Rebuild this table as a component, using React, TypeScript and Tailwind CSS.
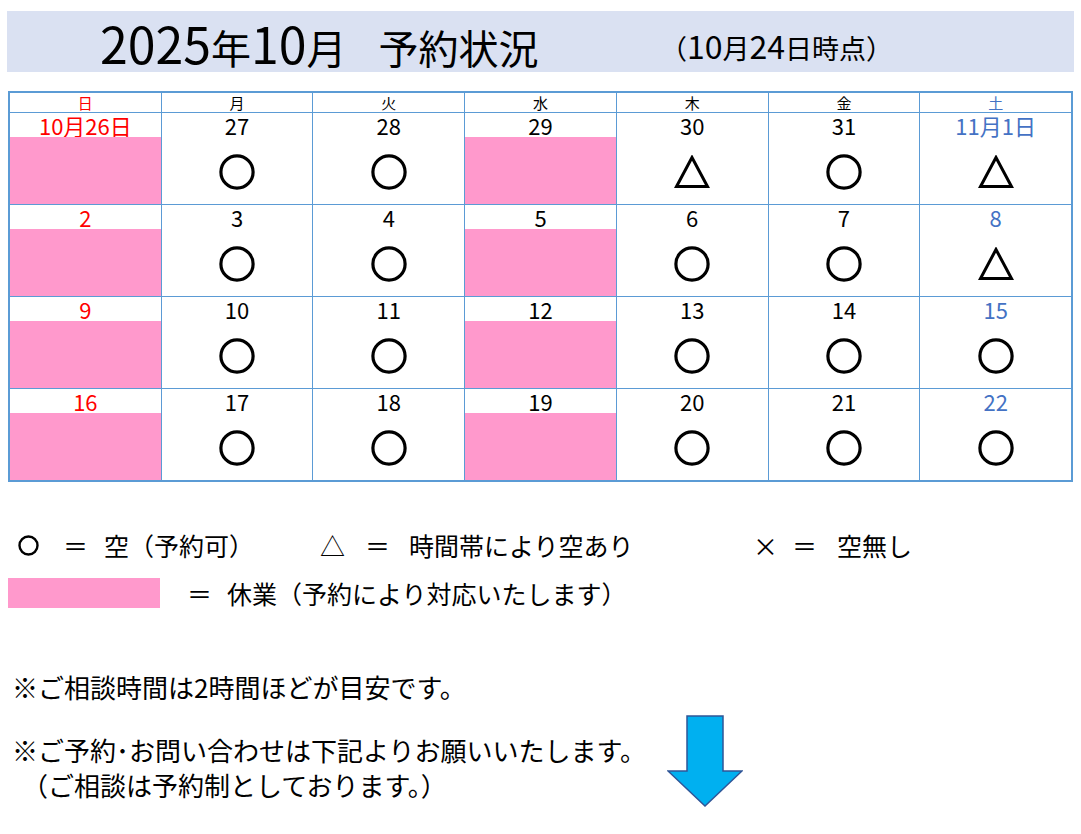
import React from "react";

type Mark = "o" | "t" | null;
type Day = { label: string; mark: Mark; closed?: boolean };

const weeks: Day[][] = [
  [
    { label: "10月26日", mark: null, closed: true },
    { label: "27", mark: "o" },
    { label: "28", mark: "o" },
    { label: "29", mark: null, closed: true },
    { label: "30", mark: "t" },
    { label: "31", mark: "o" },
    { label: "11月1日", mark: "t" },
  ],
  [
    { label: "2", mark: null, closed: true },
    { label: "3", mark: "o" },
    { label: "4", mark: "o" },
    { label: "5", mark: null, closed: true },
    { label: "6", mark: "o" },
    { label: "7", mark: "o" },
    { label: "8", mark: "t" },
  ],
  [
    { label: "9", mark: null, closed: true },
    { label: "10", mark: "o" },
    { label: "11", mark: "o" },
    { label: "12", mark: null, closed: true },
    { label: "13", mark: "o" },
    { label: "14", mark: "o" },
    { label: "15", mark: "o" },
  ],
  [
    { label: "16", mark: null, closed: true },
    { label: "17", mark: "o" },
    { label: "18", mark: "o" },
    { label: "19", mark: null, closed: true },
    { label: "20", mark: "o" },
    { label: "21", mark: "o" },
    { label: "22", mark: "o" },
  ],
];

const heads = ["日", "月", "火", "水", "木", "金", "土"];

function dayColor(i: number) {
  if (i === 0) return "text-[#ff0000]";
  if (i === 6) return "text-[#4472c4]";
  return "text-black";
}

function Circle({ size = 36, stroke = 3.2 }: { size?: number; stroke?: number }) {
  const r = size / 2 - stroke / 2 - 0.3;
  return (
    <svg width={size} height={size} viewBox={`0 0 ${size} ${size}`}>
      <circle cx={size / 2} cy={size / 2} r={r} fill="none" stroke="black" strokeWidth={stroke} />
    </svg>
  );
}

function Triangle() {
  return (
    <svg width="36" height="34" viewBox="0 0 36 34">
      <polygon points="18,2.5 2.5,31.5 33.5,31.5" fill="none" stroke="black" strokeWidth="3" />
    </svg>
  );
}

function DownArrow() {
  return (
    <svg width="76" height="92" viewBox="-1 -1 76 92">
      <polygon
        points="19,0 55,0 55,55 74,55 37,90 0,55 19,55"
        fill="#00b0f0"
        stroke="#2f5597"
        strokeWidth="1.5"
      />
    </svg>
  );
}

export default function App() {
  return (
    <div
      className="w-[1081px] h-[834px] bg-white text-black overflow-hidden"
      style={{ fontFamily: '"Noto Sans CJK JP", "Noto Sans", sans-serif' }}
    >
      {/* Title */}
      <div className="pt-[11px] px-[7px]">
        <div className="h-[61px] bg-[#dae1f2] flex items-center">
          <div className="w-[653px] pl-[93px] text-[40px] leading-none flex items-baseline">
            <span>
              <span className="text-[50px]">2025</span>年<span className="text-[50px]">10</span>月
            </span>
            <span className="ml-[32px]">予約状況</span>
          </div>
          <div className="text-[27px] leading-none mt-[6px] flex items-baseline">
            （<span className="text-[32px]">10</span>月<span className="text-[32px]">24</span>日時点）
          </div>
        </div>
      </div>

      {/* Calendar */}
      <div className="ml-[8px] mt-[19px] w-[1065px] border-2 border-[#5b9bd5] bg-[#5b9bd5] grid grid-cols-7 gap-px">
        {heads.map((h, i) => (
          <div
            key={h}
            className={`h-[19px] bg-white flex items-center justify-center text-[15px] leading-none ${dayColor(i)}`}
          >
            {h}
          </div>
        ))}
        {weeks.flatMap((w, wi) =>
          w.map((d, i) => (
            <div key={`${wi}-${i}`} className="h-[91px] bg-white flex flex-col">
              <div
                className={`h-[24px] flex items-center justify-center text-[22px] leading-none ${dayColor(i)}`}
              >
                {d.label}
              </div>
              <div
                className={`flex-1 flex items-center justify-center pt-[3px] ${
                  d.closed ? "bg-[#ff99cc]" : ""
                }`}
              >
                {d.mark === "o" && <Circle />}
                {d.mark === "t" && <Triangle />}
              </div>
            </div>
          ))
        )}
      </div>

      {/* Legend */}
      <div className="mt-[45px] h-[36px] flex items-center text-[25px] leading-none ml-[16px]">
        <span className="w-[47px] pl-[2px] flex items-center">
          <Circle size={21} stroke={2.4} />
        </span>
        <span className="w-[41px]">＝</span>
        <span className="w-[216px]">空（予約可）</span>
        <span className="w-[45px]">△</span>
        <span className="w-[44px]">＝</span>
        <span className="w-[344px]">時間帯により空あり</span>
        <span className="w-[39px]">×</span>
        <span className="w-[45px]">＝</span>
        <span>空無し</span>
      </div>
      <div className="mt-[12px] h-[36px] flex items-center text-[25px] leading-none ml-[8px]">
        <div className="w-[152px] h-[30px] bg-[#ff99cc]" />
        <span className="ml-[27px] w-[40px]">＝</span>
        <span>休業（予約により対応いたします）</span>
      </div>

      {/* Notes */}
      <div className="mt-[58px] ml-[12px] text-[26px] leading-[35px]">
        ※ご相談時間は2時間ほどが目安です。
      </div>
      <div className="mt-[11px] ml-[12px] flex items-start">
        <div className="w-[655px] pt-[17px] text-[26px] leading-[35px]">
          <div>※ご予約･お問い合わせは下記よりお願いいたします。</div>
          <div className="pl-[10px]">（ご相談は予約制としております。）</div>
        </div>
        <DownArrow />
      </div>
    </div>
  );
}
